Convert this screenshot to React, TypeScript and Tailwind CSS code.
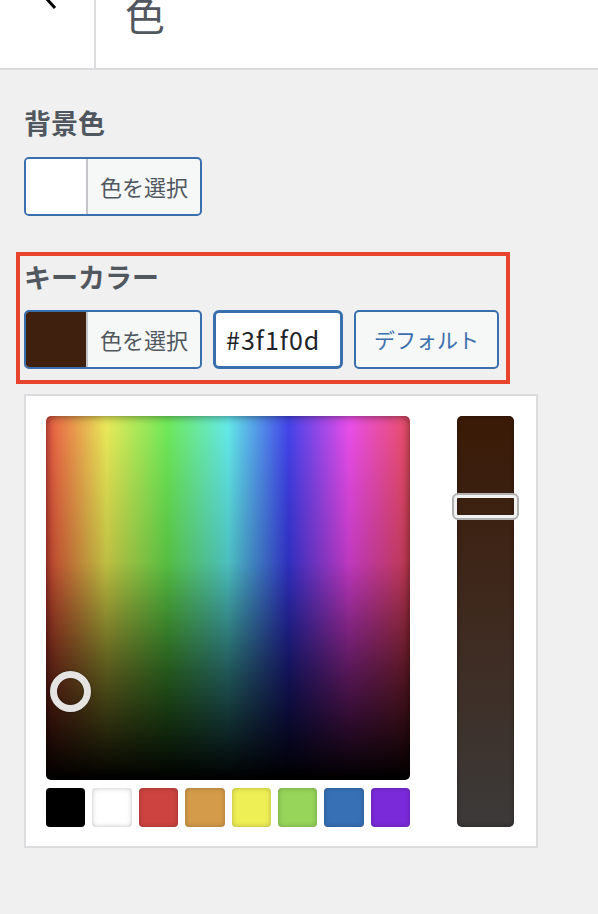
import React from "react";

const swatches = [
  "bg-[#000000]",
  "bg-[#ffffff]",
  "bg-[#cc4340]",
  "bg-[#d49b4a]",
  "bg-[#eeee55]",
  "bg-[#96d45a]",
  "bg-[#3870b5]",
  "bg-[#7a2ad9]",
];

const ColorButton = ({ swatch }: { swatch: string }) => (
  <button className="flex h-[59px] w-[178px] overflow-hidden rounded-[5px] border-2 border-[#3a6fae] bg-[#f6f7f7]">
    <span className={`h-full w-[62px] border-r-2 border-[#c3c4c7] ${swatch}`} />
    <span className="flex flex-1 items-center justify-center text-[22px] text-[#50575e]">
      色を選択
    </span>
  </button>
);

export default function App() {
  return (
    <div className="min-h-[914px] w-full bg-[#f0f0f1] font-['Noto_Sans_CJK_JP','Noto_Sans',sans-serif]">
      <header className="flex h-[70px] border-b-2 border-[#dcdcde] bg-white">
        <div className="relative w-[96px] overflow-hidden border-r-2 border-[#dcdcde]">
          <svg
            className="absolute left-[38px] top-[-14px]"
            width="24"
            height="24"
            viewBox="0 0 24 24"
            fill="none"
            stroke="#000"
            strokeWidth="3"
            strokeLinecap="square"
          >
            <path d="M16 3 L8 12 L16 21" />
          </svg>
        </div>
        <div className="-mt-[6px] pl-[29px] text-[40px] leading-[40px] text-[#50575e]">
          色
        </div>
      </header>

      <div className="px-[24px]">
        <div className="mt-[39px] text-[27px] font-bold leading-[27px] text-[#50575e]">
          背景色
        </div>
        <div className="mt-[21px]">
          <ColorButton swatch="bg-white" />
        </div>

        <div className="-ml-[8px] mt-[36px] w-[494px] border-4 border-[#e8432d] px-[4px] pb-[11px] pt-[7px]">
          <div className="text-[27px] font-bold leading-[27px] text-[#50575e]">
            キーカラー
          </div>
          <div className="mt-[20px] flex gap-[11px]">
            <ColorButton swatch="bg-[#3f1f0d]" />
            <div className="flex h-[59px] w-[130px] items-center rounded-[6px] border-[3px] border-[#3a6fae] bg-white pl-[10px] text-[25px] tracking-[1px] text-[#1d2327]">
              #3f1f0d
            </div>
            <button className="flex h-[59px] w-[145px] items-center justify-center rounded-[5px] border-2 border-[#3a6fae] bg-[#f6f7f7] text-[21px] text-[#3a6fae]">
              デフォルト
            </button>
          </div>
        </div>

        <div className="mt-[10px] flex w-[514px] border-2 border-[#dcdcde] bg-white pb-[19px] pl-[20px] pr-[22px] pt-[20px]">
          <div className="w-[364px]">
            <div className="relative h-[364px] w-[364px] rounded-[5px] bg-[linear-gradient(to_bottom,rgba(0,0,0,0)_0%,rgba(0,0,0,0.18)_40%,rgba(0,0,0,0.62)_70%,rgba(0,0,0,1)_100%),linear-gradient(to_bottom,rgba(190,190,190,0.3),rgba(128,128,128,0.22)),linear-gradient(to_right,#ff2a10,#ffff30_16.6%,#50ff30_33.3%,#40ffff_50%,#1010ff_66.6%,#ff20ff_83.3%,#ff2040)] shadow-[inset_0_0_10px_rgba(0,0,0,0.55)]">
              <span className="absolute left-[4px] top-[255px] h-[41px] w-[41px] rounded-full border-[7px] border-[#e6e4e3] shadow-[0_0_2px_rgba(0,0,0,0.6),inset_0_0_2px_rgba(0,0,0,0.6)]" />
            </div>
            <div className="mt-[8px] grid grid-cols-8 gap-[7px]">
              {swatches.map((c) => (
                <span
                  key={c}
                  className={`h-[39px] rounded-[4px] ${c} shadow-[inset_0_0_5px_rgba(0,0,0,0.25)]`}
                />
              ))}
            </div>
          </div>
          <div className="relative ml-[47px] w-[57px] rounded-[5px] bg-[linear-gradient(to_bottom,#3a1a06,#3f2a1f_50%,#3c3a39)] shadow-[inset_0_0_4px_rgba(0,0,0,0.4)]">
            <span className="absolute left-[-5px] top-[77px] h-[27px] w-[67px] rounded-[6px] border-2 border-[#b0b0b0] shadow-[inset_0_0_0_3px_#f2f2f2]" />
          </div>
        </div>
      </div>
    </div>
  );
}
